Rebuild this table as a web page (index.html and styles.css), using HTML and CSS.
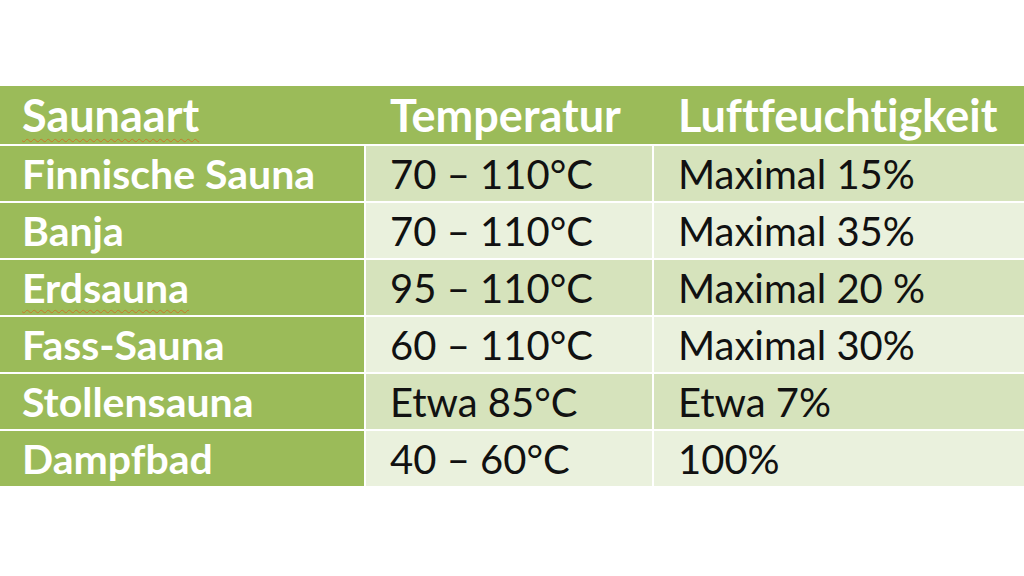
FILE: index.html
```html
<!DOCTYPE html>
<html lang="de">
<head>
  <meta charset="UTF-8">
  <meta name="viewport" content="width=device-width, initial-scale=1.0">
  <title>Saunaarten</title>
  <link rel="stylesheet" href="styles.css">
</head>
<body>

  <!-- Vergleichstabelle der Saunaarten -->
  <table class="sauna-table">
    <thead>
      <tr>
        <th><span class="spell">Saunaart</span></th>
        <th>Temperatur</th>
        <th>Luftfeuchtigkeit</th>
      </tr>
    </thead>
    <tbody>
      <tr class="odd">
        <th>Finnische Sauna</th>
        <td>70 – 110°C</td>
        <td>Maximal 15%</td>
      </tr>
      <tr class="even">
        <th>Banja</th>
        <td>70 – 110°C</td>
        <td>Maximal 35%</td>
      </tr>
      <tr class="odd">
        <th><span class="spell">Erdsauna</span></th>
        <td>95 – 110°C</td>
        <td>Maximal 20 %</td>
      </tr>
      <tr class="even">
        <th>Fass-Sauna</th>
        <td>60 – 110°C</td>
        <td>Maximal 30%</td>
      </tr>
      <tr class="odd">
        <th>Stollensauna</th>
        <td>Etwa 85°C</td>
        <td>Etwa 7%</td>
      </tr>
      <tr class="even">
        <th>Dampfbad</th>
        <td>40 – 60°C</td>
        <td>100%</td>
      </tr>
    </tbody>
  </table>

</body>
</html>
```

FILE: styles.css
```css
html, body {
  margin: 0;
  background-color: #fff;
  font-family: Lato, "Open Sans", sans-serif;
  font-variant-ligatures: none;
  overflow: hidden;
}

/* Die Tabelle geht über die volle Breite */
.sauna-table {
  width: 1024px;
  margin-top: 86px;
  border-collapse: separate;
  border-spacing: 0;
  table-layout: fixed;
}

/* Spaltenbreiten ohne Innenabstand: 364px / 288px / Rest */
.sauna-table thead th:nth-child(1) {
  width: 342px;
}

.sauna-table thead th:nth-child(2) {
  width: 262px;
}

.sauna-table th,
.sauna-table td {
  text-align: left;
  padding: 0 0 0 22px;
  vertical-align: middle;
  white-space: nowrap;
}

/* Kopfzeile */
.sauna-table thead th {
  height: 58px;
  background-color: #9bbb59;
  color: #fff;
  font-size: 45px;
  font-weight: 700;
}

.sauna-table thead th + th {
  padding-left: 26px;
}

.sauna-table tbody tr > * {
  height: 55px;
  border-top: 2px solid #fff;
}

/* Erste Spalte ist grün wie der Kopf */
.sauna-table tbody th {
  background-color: #9bbb59;
  color: #fff;
  font-size: 41px;
  font-weight: 700;
}

.sauna-table tbody td {
  border-left: 2px solid #fff;
  color: #111;
  font-size: 40px;
  font-weight: 400;
  padding-left: 24px;
}

.sauna-table tr.odd td {
  background-color: #d6e3bc;
}

.sauna-table tr.even td {
  background-color: #eaf1dd;
}

/* Rechtschreibprüfung, wie in Office */
.spell {
  text-decoration: underline wavy #c57a2a;
  text-decoration-thickness: 1px;
  text-underline-offset: 6px;
}
```
